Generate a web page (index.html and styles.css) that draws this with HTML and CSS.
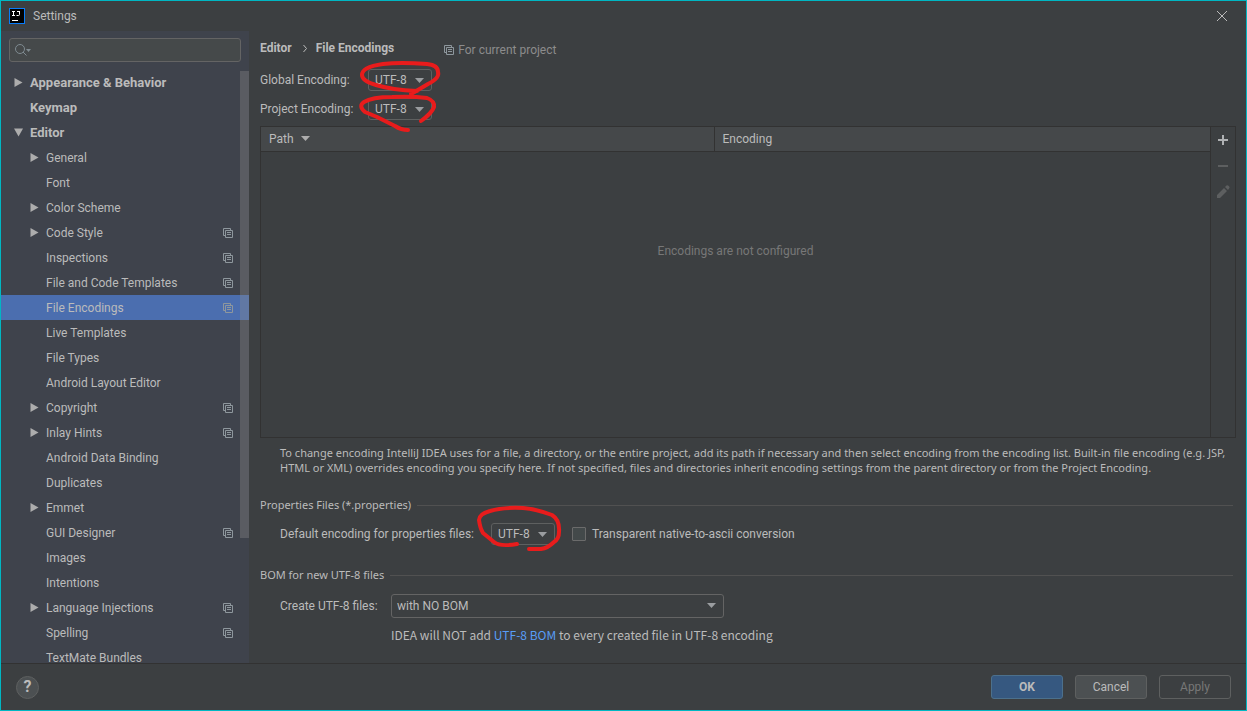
FILE: index.html
```html
<!DOCTYPE html>
<html lang="en">
<head>
<meta charset="utf-8">
<title>Settings</title>
<link rel="stylesheet" href="styles.css">
</head>
<body>
<svg class="defs" aria-hidden="true">
  <symbol id="project" viewBox="0 0 10 10"><path d="M7.500 2V.5h-7v7H2M2.500 2.500h7v7h-7zM4 4.500h4M4 6.500h4" fill="none" stroke="currentColor"/></symbol>
  <symbol id="right" viewBox="0 0 8 9"><path d="M0 0L8 4.500L0 9z" fill="currentColor"/></symbol>
  <symbol id="down" viewBox="0 0 9 8"><path d="M0 0H9L4.500 8z" fill="currentColor"/></symbol>
  <symbol id="drop" viewBox="0 0 9 5"><path d="M0 0H9L4.500 5z" fill="currentColor"/></symbol>
</svg>
<div class="window">
  <header class="titlebar">
    <svg class="logo" viewBox="0 0 16 16"><path fill="#087cfa" d="M0 0h16v16H0z"/><path fill="#000" d="M1 1h14v14H1z"/><path d="M3 3.500h3M4.500 3v5M3 7.500h3M8 3.500h3M10.500 3v3.500q0 1-1 1H7.500" fill="none" stroke="#fff"/><path fill="#fff" d="M3 12h6v1H3z"/></svg>
    <h1 class="title">Settings</h1>
    <button class="close" aria-label="Close"><svg viewBox="0 0 10 10"><path d="M0 0L10 10M10 0L0 10" stroke="currentColor"/></svg></button>
  </header>
  <div class="content">
    <aside class="sidebar">
      <div class="search">
        <svg class="search-icon" viewBox="0 0 16 12"><circle cx="5" cy="5" r="4.500" fill="none" stroke="currentColor"/><path d="M8 8l3.500 3.500" stroke="currentColor"/><path d="M11 5h5l-2.500 3z" fill="currentColor"/></svg>
        <input class="search-input" type="text" aria-label="Search settings">
      </div>
      <div class="tree-wrap">
      <nav class="tree" aria-label="Settings categories">
        <a class="row top" href="#"><svg class="arrow"><use href="#right"/></svg><span class="name">Appearance &amp; Behavior</span></a>
        <a class="row top" href="#"><span class="arrow"></span><span class="name">Keymap</span></a>
        <a class="row top" href="#"><svg class="arrow"><use href="#down"/></svg><span class="name">Editor</span></a>
        <a class="row" href="#"><svg class="arrow"><use href="#right"/></svg><span class="name">General</span></a>
        <a class="row" href="#"><span class="arrow"></span><span class="name">Font</span></a>
        <a class="row" href="#"><svg class="arrow"><use href="#right"/></svg><span class="name">Color Scheme</span></a>
        <a class="row" href="#"><svg class="arrow"><use href="#right"/></svg><span class="name">Code Style</span><svg class="proj"><use href="#project"/></svg></a>
        <a class="row" href="#"><span class="arrow"></span><span class="name">Inspections</span><svg class="proj"><use href="#project"/></svg></a>
        <a class="row" href="#"><span class="arrow"></span><span class="name">File and Code Templates</span><svg class="proj"><use href="#project"/></svg></a>
        <a class="row selected" href="#" aria-current="page"><span class="arrow"></span><span class="name">File Encodings</span><svg class="proj"><use href="#project"/></svg></a>
        <a class="row" href="#"><span class="arrow"></span><span class="name">Live Templates</span></a>
        <a class="row" href="#"><span class="arrow"></span><span class="name">File Types</span></a>
        <a class="row" href="#"><span class="arrow"></span><span class="name">Android Layout Editor</span></a>
        <a class="row" href="#"><svg class="arrow"><use href="#right"/></svg><span class="name">Copyright</span><svg class="proj"><use href="#project"/></svg></a>
        <a class="row" href="#"><svg class="arrow"><use href="#right"/></svg><span class="name">Inlay Hints</span><svg class="proj"><use href="#project"/></svg></a>
        <a class="row" href="#"><span class="arrow"></span><span class="name">Android Data Binding</span></a>
        <a class="row" href="#"><span class="arrow"></span><span class="name">Duplicates</span></a>
        <a class="row" href="#"><svg class="arrow"><use href="#right"/></svg><span class="name">Emmet</span></a>
        <a class="row" href="#"><span class="arrow"></span><span class="name">GUI Designer</span><svg class="proj"><use href="#project"/></svg></a>
        <a class="row" href="#"><span class="arrow"></span><span class="name">Images</span></a>
        <a class="row" href="#"><span class="arrow"></span><span class="name">Intentions</span></a>
        <a class="row" href="#"><svg class="arrow"><use href="#right"/></svg><span class="name">Language Injections</span><svg class="proj"><use href="#project"/></svg></a>
        <a class="row" href="#"><span class="arrow"></span><span class="name">Spelling</span><svg class="proj"><use href="#project"/></svg></a>
        <a class="row" href="#"><span class="arrow"></span><span class="name">TextMate Bundles</span></a>
      </nav>
      <div class="scrollbar"></div>
      </div>
    </aside>
    <main class="main">
      <div class="crumbs">
        <h2 class="crumb">Editor</h2>
        <svg class="chevron" viewBox="0 0 4 7"><path d="M.5 0L3.500 3.500L.5 7" fill="none" stroke="currentColor"/></svg>
        <h2 class="crumb">File Encodings</h2>
        <span class="scope"><svg class="proj"><use href="#project"/></svg>For current project</span>
      </div>
      <div class="encodings">
        <label for="global">Global Encoding:</label>
        <span class="combo"><select id="global"><option>UTF-8</option></select><svg class="drop"><use href="#drop"/></svg></span>
        <label for="project-enc">Project Encoding:</label>
        <span class="combo"><select id="project-enc"><option>UTF-8</option></select><svg class="drop"><use href="#drop"/></svg></span>
      </div>
      <section class="panel">
        <table class="table">
          <thead><tr><th class="path">Path <svg class="sort"><use href="#drop"/></svg></th><th>Encoding</th></tr></thead>
          <tbody><tr><td colspan="2">Encodings are not configured</td></tr></tbody>
        </table>
        <div class="tools">
          <button aria-label="Add"><svg viewBox="0 0 16 16"><path d="M3 8h10M8 3v10" stroke="#afb1b3" stroke-width="2"/></svg></button>
          <button aria-label="Remove" disabled><svg viewBox="0 0 16 16"><path d="M3 8h10" stroke="#5d5f60" stroke-width="2"/></svg></button>
          <button aria-label="Edit" disabled><svg viewBox="0 0 16 16"><path d="M2 14v-3l7-7 3 3-7 7zM10 3l1.500-1.500q1-.7 2 .3l.7.700q.8 1 0 1.800L13 6z" fill="#5d5f60"/></svg></button>
        </div>
      </section>
      <p class="note">To change encoding IntelliJ IDEA uses for a file, a directory, or the entire project, add its path if necessary and then select encoding from the encoding list. Built-in file encoding (e.g. JSP, HTML or XML) overrides encoding you specify here. If not specified, files and directories inherit encoding settings from the parent directory or from the Project Encoding.</p>
      <h3 class="group">Properties Files (*.properties)</h3>
      <div class="form-row props">
        <label for="props">Default encoding for properties files:</label>
        <span class="combo"><select id="props"><option>UTF-8</option></select><svg class="drop"><use href="#drop"/></svg></span>
        <input class="check" type="checkbox" id="ascii"><label for="ascii">Transparent native-to-ascii conversion</label>
      </div>
      <h3 class="group">BOM for new UTF-8 files</h3>
      <div class="form-row bom">
        <label for="bom">Create UTF-8 files:</label>
        <span class="combo wide"><select id="bom"><option>with NO BOM</option></select><svg class="drop"><use href="#drop"/></svg></span>
        <p class="hint">IDEA will NOT add <a href="#">UTF-8 BOM</a> to every created file in UTF-8 encoding</p>
      </div>
    </main>
  </div>
  <footer class="footer">
    <button class="help" aria-label="Help">?</button>
    <button class="btn primary">OK</button>
    <button class="btn">Cancel</button>
    <button class="btn off" disabled>Apply</button>
  </footer>
  <svg class="marks" aria-hidden="true" fill="none" stroke="#e81c1c" stroke-width="4" stroke-linecap="round" stroke-linejoin="round">
    <path d="M417 91Q392 90 376 85Q362 81 362 75Q362 67 383 64Q400 62 427 64Q438 65 438 72Q440 78 428 84Q418 90 411 94"/>
    <path d="M408 130Q401 130 395 126L377 117L365 112Q358 106 364 102Q372 97 392 97Q412 96 427 98Q435 101 434 107Q432 113 421 121"/>
    <path d="M517 544Q500 547 494 542L483 533Q480 528 479 520Q479 514 490 511Q503 507 523 508Q536 509 552 515Q560 520 559 532Q559 539 554 542Q548 548 541 549H529"/>
  </svg>
</div>
</body>
</html>
```
FILE: styles.css
```css
* { box-sizing: border-box; }
body { margin: 0; background: #3c3f41; color: #bbbbbb; font: 12px/18px Roboto, "Noto Sans CJK KR", sans-serif; }
h1, h2, h3, p { margin: 0; font-size: 12px; font-weight: 400; }
button, input, select { font: inherit; color: inherit; margin: 0; padding: 0; }
button { display: flex; align-items: center; justify-content: center; background: none; border: 0; }
a { color: #589df6; text-decoration: none; }
.defs { position: absolute; width: 0; height: 0; }
.window { position: relative; display: flex; flex-direction: column; height: 100vh; border: 1px solid #00b7c3; }
.titlebar { display: flex; align-items: center; flex: none; height: 30px; padding: 0 19px 0 8px; }
.logo { width: 16px; height: 16px; margin-right: 8px; }
.title { flex: 1; }
.close svg { width: 10px; height: 10px; }
.content { display: flex; flex: 1; min-height: 0; }

.sidebar { display: flex; flex-direction: column; flex: none; width: 248px; background: #3f434c; }
.search { display: flex; align-items: center; gap: 4px; flex: none; height: 24px; margin: 7px 8px 8px; padding: 0 5px; background: #45494a; border: 1px solid #646464; border-radius: 3px; }
.search-icon { flex: none; width: 16px; height: 12px; color: #7f8b91; }
.search-input { flex: 1; min-width: 0; background: none; border: 0; outline: 0; }
.tree-wrap { position: relative; flex: 1; min-height: 0; overflow: hidden; }
.row { display: flex; align-items: center; height: 25px; padding: 0 16px 0 29px; color: #bbbbbb; }
.row.top { padding-left: 13px; font-size: 13px; font-weight: 700; }
.arrow { flex: none; width: 9px; height: 9px; margin-right: 7px; color: #adadad; }
.name { flex: 1; white-space: nowrap; }
.proj { flex: none; width: 10px; height: 10px; color: #8e979d; }
.selected { background: #4b6eaf; }
.scrollbar { position: absolute; top: 1px; right: 0; width: 9px; height: 467px; background: rgba(140, 140, 140, .35); }

.main { display: flex; flex-direction: column; flex: 1; min-width: 0; padding: 0 10px 19px 11px; }
.crumbs { display: flex; align-items: center; height: 34px; }
.crumb { font-weight: 700; }
.chevron { width: 4px; height: 7px; margin: 0 9px 0 11px; }
.scope { display: flex; align-items: center; gap: 4px; margin: 4px 0 0 50px; color: #8c8c8c; }
.encodings { display: grid; grid-template-columns: minmax(95px, max-content) max-content; align-items: center; column-gap: 13px; row-gap: 7px; margin: 4px 0 6px; }
.combo { position: relative; display: flex; width: 64px; height: 22px; }
.combo select { width: 100%; padding: 0 6px; appearance: none; background: #3c3f41; border: 1px solid #5e6060; border-radius: 3px; }
.drop { position: absolute; right: 8px; top: 9px; width: 9px; height: 5px; color: #9a9da0; pointer-events: none; }
.panel { display: flex; flex: 1; border: 1px solid #323232; min-height: 0; }
.table { flex: 1; table-layout: fixed; border-collapse: collapse; }
.table th { height: 24px; padding: 0 8px; text-align: left; font-weight: 400; background: #45484a; border-bottom: 1px solid #323232; }
.table .path { width: 453px; border-right: 1px solid #323232; }
.sort { width: 9px; height: 5px; margin: 0 0 2px 4px; color: #adadad; }
.table td { padding: 0 0 86px; text-align: center; color: #777777; }
.tools { width: 25px; border-left: 1px solid #323232; }
.tools button { width: 100%; height: 26px; }
.tools svg { width: 16px; height: 16px; }
.note, .group { font-family: "Noto Sans", sans-serif; font-size: 11px; }
.note { padding: 7px 0 0 20px; line-height: 15px; }
.group { display: flex; align-items: center; gap: 6px; margin: 21px 3px 0 0; }
.group::after { content: ""; flex: 1; height: 1px; background: #515151; }
.form-row { padding-left: 20px; align-items: center; }
.props { display: flex; margin: 9px 0 0; }
.props .combo { margin: 0 17px 0 14px; }
.props label:first-child { min-width: 197px; }
.check { appearance: none; width: 14px; height: 14px; margin-right: 6px; background: #43494a; border: 1px solid #6b6b6b; border-radius: 1px; }
.bom { display: grid; grid-template-columns: minmax(98px, max-content) 1fr; column-gap: 13px; row-gap: 8px; margin-top: 10px; }
.wide { width: 333px; height: 24px; }
.wide select { padding: 0 5px; border-color: #646464; }
.hint { grid-column: 2; font-family: "Noto Sans CJK KR", sans-serif; }
.footer { display: flex; align-items: center; gap: 12px; flex: none; height: 47px; padding: 0 15px; border-top: 1px solid #323232; }
.help { width: 23px; height: 23px; margin-right: auto; background: #4c5052; border: 1px solid #5e6060; border-radius: 50%; font-size: 16px; font-weight: 700; }
.btn { width: 72px; height: 24px; background: #4c5052; border: 1px solid #5e6060; border-radius: 3px; }
.primary { background: #365880; border-color: #4c708c; font-weight: 700; }
.off { background: none; color: #777777; }
.marks { position: absolute; inset: -1px; width: 1247px; height: 711px; pointer-events: none; }
```
